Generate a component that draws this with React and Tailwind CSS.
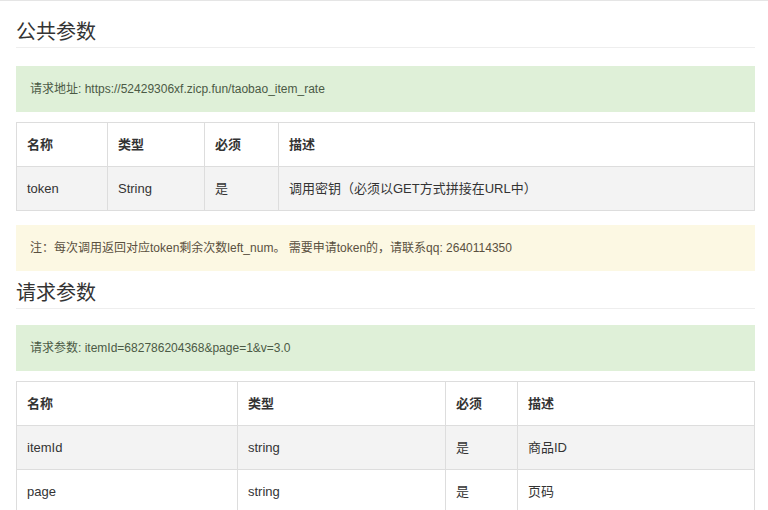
const font = { fontFamily: '"Liberation Sans", "Noto Sans CJK SC", sans-serif' };

function Table({ cols, head, rows }) {
  return (
    <table className="w-full border-collapse border border-[#ddd] text-[13px] text-[#333]">
      <thead>
        <tr className="h-[44px]">
          {head.map((h, i) => (
            <th key={i} className={`${cols[i]} border border-[#ddd] px-[10px] text-left font-bold`}>{h}</th>
          ))}
        </tr>
      </thead>
      <tbody>
        {rows.map((r, ri) => (
          <tr key={ri} className={`h-[44px] ${ri % 2 === 0 ? 'bg-[#f3f3f3]' : 'bg-white'}`}>
            {r.map((c, ci) => (
              <td key={ci} className="border border-[#ddd] px-[10px]">{c}</td>
            ))}
          </tr>
        ))}
      </tbody>
    </table>
  );
}

export default function App() {
  return (
    <div className="w-[768px] h-[510px] overflow-hidden bg-white px-[16px] pr-[13px]" style={font}>
      <div className="border-t border-[#e5e5e5] -mx-[16px]" />
      <h2 className="mt-[19px] text-[20px] leading-[24px] text-[#333] pb-[3px] border-b border-[#eee]">公共参数</h2>
      <div className="mt-[18px] h-[46px] flex items-center px-[14px] bg-[#dff0d8] text-[#4b5a45] text-[12px]">请求地址: https://52429306xf.zicp.fun/taobao_item_rate</div>
      <div className="mt-[10px]">
        <Table
          cols={['w-[91px]', 'w-[97px]', 'w-[74px]', '']}
          head={['名称', '类型', '必须', '描述']}
          rows={[['token', 'String', '是', '调用密钥（必须以GET方式拼接在URL中）']]}
        />
      </div>
      <div className="mt-[14px] h-[46px] flex items-center px-[14px] bg-[#fcf8e3] text-[#5a5040] text-[12px]">注：每次调用返回对应token剩余次数left_num。 需要申请token的，请联系qq: 2640114350</div>
      <h2 className="mt-[10px] text-[20px] leading-[24px] text-[#333] pb-[3px] border-b border-[#eee]">请求参数</h2>
      <div className="mt-[16px] h-[46px] flex items-center px-[14px] bg-[#dff0d8] text-[#4b5a45] text-[12px]">请求参数: itemId=682786204368&amp;page=1&amp;v=3.0</div>
      <div className="mt-[10px]">
        <Table
          cols={['w-[221px]', 'w-[208px]', 'w-[72px]', '']}
          head={['名称', '类型', '必须', '描述']}
          rows={[['itemId', 'string', '是', '商品ID'], ['page', 'string', '是', '页码']]}
        />
      </div>
    </div>
  );
}
